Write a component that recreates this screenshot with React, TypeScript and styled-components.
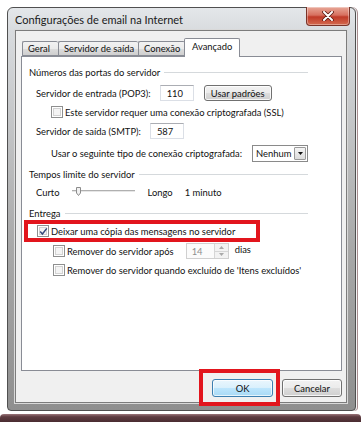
import React from "react";
import styled, { createGlobalStyle } from "styled-components";

const GlobalStyle = createGlobalStyle`
  html, body {
    margin: 0;
    background: #ffffff;
  }
  body {
    font-family: Lato, "Liberation Sans", sans-serif;
    font-size: 9.4px;
    color: #111;
  }
`;

const Page = styled.div`
  display: flex;
  flex-direction: column;
  width: 361px;
  height: 422px;
  overflow: hidden;
`;

const Window = styled.div`
  box-sizing: border-box;
  width: 349px;
  height: 404px;
  margin: 7px 0 0 7px;
  padding: 0 8px 7px 7px;
  display: flex;
  flex-direction: column;
  border: 1px solid #505050;
  border-radius: 6px 6px 4px 4px;
  background: linear-gradient(
    to bottom,
    #e4e7ea 0,
    #d8dbde 24px,
    #a8a8a8 60%,
    #8f8f8f 100%
  );
  box-shadow: 1px 0 0 #f4f4f4, 2px 0 0 #a78c8f;
`;

const TitleBar = styled.div`
  height: 24px;
  display: flex;
  align-items: flex-start;
  justify-content: space-between;
`;

const Title = styled.span`
  align-self: center;
  font-size: 11px;
  color: #1a1a1a;
  white-space: nowrap;
`;

const CloseButton = styled.div`
  width: 42px;
  height: 18px;
  margin: -1px -3px 0 0;
  display: flex;
  align-items: center;
  justify-content: center;
  border: 1px solid #7a3328;
  border-top: none;
  border-radius: 0 0 4px 4px;
  background: linear-gradient(
    to bottom,
    #e8a898 0,
    #d7705f 45%,
    #c03a28 55%,
    #d46a4e 100%
  );
  box-shadow: inset 0 0 0 1px rgba(255, 255, 255, 0.35);
`;

const Client = styled.div`
  flex: 1;
  display: flex;
  flex-direction: column;
  padding: 7px 4px 5px 5px;
  background: #f0f0f0;
  border: 1px solid #7c7c7c;
  box-shadow: 0 0 0 1px #d9d9d9;
`;

const TabStrip = styled.div`
  display: flex;
  align-items: flex-end;
  height: 18px;
  padding-left: 1px;
  position: relative;
  z-index: 1;
`;

const Tab = styled.div<{ $width: number; $active?: boolean }>`
  box-sizing: border-box;
  width: ${(p) => p.$width}px;
  height: ${(p) => (p.$active ? 19 : 15)}px;
  margin-bottom: ${(p) => (p.$active ? -1 : 0)}px;
  margin-left: ${(p) => (p.$active ? -1 : 0)}px;
  padding-left: ${(p) => (p.$active ? 7 : 5)}px;
  padding-top: ${(p) => (p.$active ? 2 : 1)}px;
  border: 1px solid #898c95;
  border-bottom: ${(p) => (p.$active ? "none" : "1px solid #898c95")};
  border-right: ${(p) => (p.$active ? "1px solid #898c95" : "none")};
  border-radius: 2px 2px 0 0;
  white-space: nowrap;
  background: ${(p) =>
    p.$active
      ? "#ffffff"
      : "linear-gradient(to bottom, #f2f2f2 0, #ebebeb 50%, #dddddd 50%, #cfcfcf 100%)"};
`;

const Panel = styled.div`
  box-sizing: border-box;
  height: 315px;
  padding: 8px 0 0 7px;
  background: #ffffff;
  border: 1px solid #898c95;
  display: flex;
  flex-direction: column;
`;

const GroupHeader = styled.div<{ $top?: number }>`
  display: flex;
  align-items: center;
  gap: 4px;
  height: 14px;
  width: 279px;
  margin-top: ${(p) => p.$top ?? 0}px;
  white-space: nowrap;

  &::after {
    content: "";
    flex: 1;
    height: 0;
    border-top: 1px solid #d5d9dc;
    margin-top: 1px;
  }
`;

const Row = styled.div<{ $indent: number; $top: number; $height?: number; $gap?: number }>`
  display: flex;
  align-items: center;
  height: ${(p) => p.$height ?? 14}px;
  margin-top: ${(p) => p.$top}px;
  padding-left: ${(p) => p.$indent}px;
  gap: ${(p) => p.$gap ?? 0}px;
  white-space: nowrap;
  position: relative;
`;

const Label = styled.span<{ $left?: number; $raise?: number }>`
  margin-left: ${(p) => p.$left ?? 0}px;
  margin-top: ${(p) => -(p.$raise ?? 0)}px;
`;

const TextBox = styled.div<{ $width: number }>`
  box-sizing: border-box;
  width: ${(p) => p.$width}px;
  height: 16px;
  padding-left: 6px;
  display: flex;
  align-items: center;
  background: #fff;
  border: 1px solid #dbdfe6;
  border-top-color: #abadb3;
`;

const PushButton = styled.div<{ $width: number; $height?: number; $left?: number; $default?: boolean }>`
  box-sizing: border-box;
  width: ${(p) => p.$width}px;
  height: ${(p) => p.$height ?? 16}px;
  margin-left: ${(p) => p.$left ?? 0}px;
  display: flex;
  align-items: center;
  justify-content: center;
  border: 1px solid ${(p) => (p.$default ? "#3c7fb1" : "#707070")};
  border-radius: 3px;
  background: ${(p) =>
    p.$default
      ? "linear-gradient(to bottom, #eaf6fd 0, #d9f0fc 50%, #bee6fd 50%, #a7d9f5 100%)"
      : "linear-gradient(to bottom, #f2f2f2 0, #ebebeb 50%, #dddddd 50%, #cfcfcf 100%)"};
  box-shadow: inset 0 0 0 1px
    ${(p) => (p.$default ? "rgba(255,255,255,0.7)" : "rgba(255,255,255,0.8)")};
`;

const Box = styled.span`
  box-sizing: border-box;
  width: 12px;
  height: 12px;
  margin-right: 2px;
  flex: none;
  display: flex;
  align-items: center;
  justify-content: center;
  border: 1px solid #8e8f8f;
  background: #f4f4f4;
  box-shadow: inset 0 0 0 1px #fff, inset 0 0 0 2px #d2d2d2;
`;

const Select = styled.div`
  box-sizing: border-box;
  width: 56px;
  height: 17px;
  margin-left: 10px;
  padding: 0 1px 0 3px;
  display: flex;
  align-items: center;
  justify-content: space-between;
  gap: 2px;
  border: 1px solid #8a8a8a;
  background: #fff;
`;

const DropButton = styled.span`
  box-sizing: border-box;
  width: 12px;
  height: 13px;
  flex: none;
  display: flex;
  align-items: center;
  justify-content: center;
  border: 1px solid #9a9a9a;
  border-radius: 1px;
  background: linear-gradient(to bottom, #f4f4f4, #dcdcdc);
`;

const SliderTrack = styled.svg`
  margin-left: 13px;
`;

const Spinner = styled.div`
  box-sizing: border-box;
  width: 43px;
  height: 16px;
  margin-left: 12px;
  display: flex;
  border: 1px solid #d0d0d0;
  background: #fbfbfb;
`;

const SpinValue = styled.span`
  flex: 1;
  padding-left: 5px;
  display: flex;
  align-items: center;
  color: #8e8e8e;
`;

const SpinButtons = styled.span`
  width: 13px;
  display: flex;
  flex-direction: column;
  border-left: 1px solid #d6d6d6;
`;

const SpinButton = styled.span`
  flex: 1;
  display: flex;
  align-items: center;
  justify-content: center;
  background: #f2f2f2;
  & + & {
    border-top: 1px solid #d6d6d6;
  }
`;

const ButtonRow = styled.div`
  display: flex;
  justify-content: flex-end;
  gap: 9px;
  margin-top: 8px;
`;

const Marked = styled.div`
  position: relative;
`;

const Highlight = styled.div<{ $left: number; $top: number; $w: number; $h: number }>`
  position: absolute;
  box-sizing: border-box;
  left: ${(p) => p.$left}px;
  top: ${(p) => p.$top}px;
  width: ${(p) => p.$w}px;
  height: ${(p) => p.$h}px;
  border: 4px solid #e2151d;
  pointer-events: none;
`;

const Desktop = styled.div`
  height: 8px;
  margin-top: 3px;
  border-radius: 4px 4px 0 0;
  background: linear-gradient(to bottom, #9a7479 0, #5e3c41 35%, #4a2c31 100%);
`;

const Check = ({ checked }: { checked?: boolean }) => (
  <Box>
    {checked && (
      <svg width="9" height="9" viewBox="0 0 9 9">
        <path d="M1.2 4.6 L3.4 7 L7.8 1.4" fill="none" stroke="#34487a" strokeWidth="1.5" />
      </svg>
    )}
  </Box>
);

const Slider = () => (
  <SliderTrack width="64" height="10" viewBox="0 0 64 10">
    <line x1="0" y1="3.5" x2="63" y2="3.5" stroke="#b0b0b0" />
    <line x1="0" y1="4.5" x2="63" y2="4.5" stroke="#e6e6e6" />
    <path d="M4.5 0.5 H8.5 V6 L6.5 8.5 L4.5 6 Z" fill="#f1f1f1" stroke="#8c8c8c" />
  </SliderTrack>
);

const Arrow = ({ up, color }: { up?: boolean; color: string }) => (
  <svg width="5" height="3" viewBox="0 0 5 3">
    <path d={up ? "M0 3 L2.5 0 L5 3 Z" : "M0 0 L5 0 L2.5 3 Z"} fill={color} />
  </svg>
);

const tabs = [
  { label: "Geral", width: 36 },
  { label: "Servidor de saída", width: 80 },
  { label: "Conexão", width: 47 },
];

export default function App() {
  return (
    <Page>
      <GlobalStyle />
      <Window>
        <TitleBar>
          <Title>Configurações de email na Internet</Title>
          <CloseButton>
            <svg width="12" height="10" viewBox="0 0 12 10">
              <path
                d="M2 1 L10 9 M10 1 L2 9"
                stroke="#5a1a12"
                strokeWidth="3.6"
                strokeLinecap="round"
              />
              <path d="M2 1 L10 9 M10 1 L2 9" stroke="#ffffff" strokeWidth="2" strokeLinecap="round" />
            </svg>
          </CloseButton>
        </TitleBar>
        <Client>
          <TabStrip>
            {tabs.map((t) => (
              <Tab key={t.label} $width={t.width}>
                {t.label}
              </Tab>
            ))}
            <Tab $width={56} $active>
              Avançado
            </Tab>
          </TabStrip>
          <Panel>
            <GroupHeader>Números das portas do servidor</GroupHeader>
            <Row $indent={7} $top={6} $height={16} $gap={9}>
              <Label>Servidor de entrada (POP3):</Label>
              <TextBox $width={34}>110</TextBox>
              <PushButton $width={68} $left={1}>
                Usar padrões
              </PushButton>
            </Row>
            <Row $indent={22} $top={4}>
              <Check />
              <Label>Este servidor requer uma conexão criptografada (SSL)</Label>
            </Row>
            <Row $indent={7} $top={4} $height={16} $gap={9}>
              <Label>Servidor de saída (SMTP):</Label>
              <TextBox $width={34}>587</TextBox>
            </Row>
            <Row $indent={22} $top={6} $height={17}>
              <Label>Usar o seguinte tipo de conexão criptografada:</Label>
              <Select>
                Nenhum
                <DropButton>
                  <Arrow color="#111" />
                </DropButton>
              </Select>
            </Row>

            <GroupHeader $top={5}>Tempos limite do servidor</GroupHeader>
            <Row $indent={7} $top={4}>
              <Label>Curto</Label>
              <Slider />
              <Label $left={11}>Longo</Label>
              <Label $left={12}>1 minuto</Label>
            </Row>

            <GroupHeader $top={7}>Entrega</GroupHeader>
            <Marked>
              <Row $indent={8} $top={4}>
                <Check checked />
                <Label>Deixar uma cópia das mensagens no servidor</Label>
              </Row>
              <Highlight $left={-5} $top={0} $w={236} $h={22} />
            </Marked>
            <Row $indent={24} $top={5} $height={16}>
              <Check />
              <Label>Remover do servidor após</Label>
              <Spinner>
                <SpinValue>14</SpinValue>
                <SpinButtons>
                  <SpinButton>
                    <Arrow up color="#a9a9a9" />
                  </SpinButton>
                  <SpinButton>
                    <Arrow color="#a9a9a9" />
                  </SpinButton>
                </SpinButtons>
              </Spinner>
              <Label $left={6} $raise={4}>
                dias
              </Label>
            </Row>
            <Row $indent={24} $top={4}>
              <Check />
              <Label>Remover do servidor quando excluído de 'Itens excluídos'</Label>
            </Row>
          </Panel>
          <ButtonRow>
            <Marked>
              <PushButton $width={61} $height={18} $default>
                OK
              </PushButton>
              <Highlight $left={-13} $top={-10} $w={81} $h={37} />
            </Marked>
            <PushButton $width={60} $height={18}>
              Cancelar
            </PushButton>
          </ButtonRow>
        </Client>
      </Window>
      <Desktop />
    </Page>
  );
}
